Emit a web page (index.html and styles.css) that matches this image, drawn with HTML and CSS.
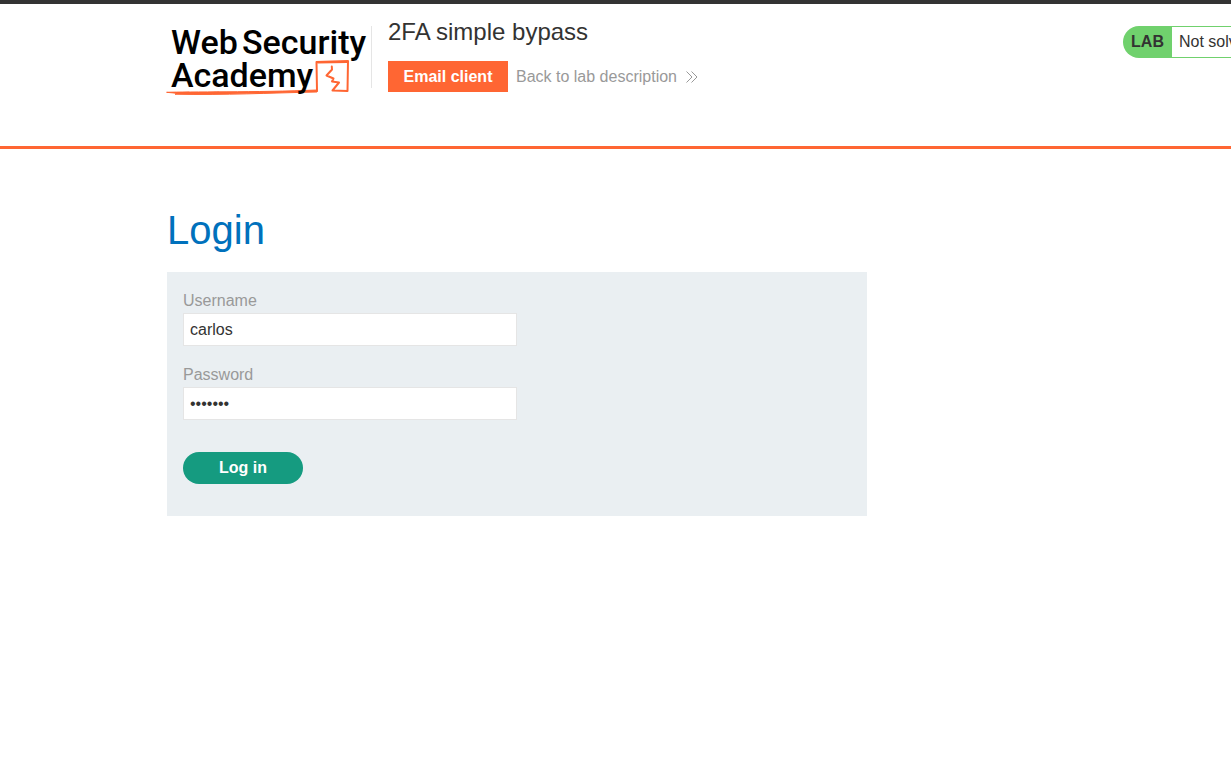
FILE: index.html
```html
<!DOCTYPE html>
<html lang="en">
<head>
<meta charset="utf-8">
<meta name="viewport" content="width=device-width, initial-scale=1">
<title>2FA simple bypass</title>
<link rel="stylesheet" href="styles.css">
</head>
<body>
<header class="lab-header">
  <a class="logo" href="#" aria-label="Web Security Academy">
    <svg class="logo-art" viewBox="0 0 204 76" width="204" height="76">
      <g class="logo-mark">
        <path class="logo-fill" d="M0 70.3 C20 69.6 90 70.5 150 68 L150 70 C100 71 60 73.2 8 72.2 L10 71.4 Z"/>
        <path d="M150 69 L149.500 40 L181 39 L180.500 69 L165.500 68.500 L172 60.500 L165 59.500 L166.500 56.500 L159.500 53.500 L165 47.500 L164.800 44.500"/>
        <path d="M151 40.500 L180 40"/>
      </g>
      <g class="logo-text">
        <text x="4" y="32">Web</text>
        <text x="75" y="32">Security</text>
        <text x="4" y="65">Academy</text>
      </g>
    </svg>
  </a>
  <div class="title-box">
    <h2 class="title">2FA simple bypass</h2>
    <nav class="links">
      <a class="email-button" href="#">Email client</a>
      <a class="back-link" href="#">Back to lab description
        <svg class="chevrons" viewBox="0 0 12 12" width="12" height="12"><path d="M0.5 0.5 L6 6 L0.5 11.5 M5.500 0.5 L11 6 L5.500 11.5"/></svg>
      </a>
    </nav>
  </div>
  <div class="status">
    <span class="status-tag">LAB</span>
    <span class="status-text">Not solved</span>
  </div>
</header>
<main class="page">
  <h1 class="heading">Login</h1>
  <form class="login-form">
    <label class="label" for="username">Username</label>
    <input class="field" id="username" type="text" value="carlos">
    <label class="label" for="password">Password</label>
    <input class="field" id="password" type="password" value="montoya">
    <button class="submit" type="button">Log in</button>
  </form>
</main>
</body>
</html>
```
FILE: styles.css
```css
* {
  box-sizing: border-box;
}

body {
  margin: 0;
  border-top: 4px solid #333;
  background: #fff;
  color: #333332;
  font: 16px/24px "Liberation Sans", Arial, sans-serif;
}

.lab-header {
  display: flex;
  align-items: flex-start;
  min-height: 145px;
  padding: 12px 0 0 167px;
  border-bottom: 3px solid #ff6633;
  overflow: hidden;
}

.logo {
  flex: none;
  width: 205px;
  height: 62px;
  margin-top: 10px;
  border-right: 1px solid #e5e5e5;
}

.logo-art {
  display: block;
  overflow: visible;
  margin-top: -4px;
}

.logo-text {
  fill: #000;
  font: 500 34px Roboto, sans-serif;
}

.logo-mark {
  fill: none;
  stroke: #ff6633;
  stroke-width: 2;
  stroke-linecap: round;
  stroke-linejoin: round;
}

.logo-fill {
  fill: #ff6633;
  stroke-width: 1;
}

.title-box {
  flex: 1;
  padding-left: 16px;
}

.title {
  margin: 0 0 13px;
  font-size: 24px;
  font-weight: 400;
  line-height: 32px;
}

.links {
  display: flex;
  align-items: center;
  gap: 8px;
}

.email-button {
  width: 120px;
  background: #ff6633;
  color: #fff;
  font-weight: 700;
  line-height: 31px;
  text-align: center;
  text-decoration: none;
}

.back-link {
  display: flex;
  align-items: center;
  gap: 9px;
  color: #999;
  text-decoration: none;
}

.chevrons {
  fill: none;
  stroke: #999;
  stroke-width: 1;
}

.status {
  display: flex;
  flex: 0 0 108px;
  min-width: 0;
  margin-top: 10px;
  overflow: hidden;
  line-height: 32px;
  white-space: nowrap;
}

.status-tag {
  flex: none;
  width: 49px;
  border-radius: 16px 0 0 16px;
  background: #70d16d;
  font-weight: 700;
  text-align: center;
}

.status-text {
  flex: none;
  padding: 0 32px 0 7px;
  border: 1px solid #70d16d;
  border-left: 0;
  line-height: 30px;
}

.page {
  padding: 57px 16px 0 167px;
}

.heading {
  margin: 0 0 18px;
  color: #0071bc;
  font-size: 40px;
  font-weight: 400;
  line-height: 48px;
}

.login-form {
  display: flex;
  flex-direction: column;
  align-items: flex-start;
  max-width: 700px;
  padding: 16px 16px 32px;
  background: #eaeff2;
}

.label {
  color: #999;
  line-height: 25px;
}

.field {
  width: 50%;
  height: 33px;
  margin: 0 0 16px;
  padding: 0 6px;
  border: 1px solid #e5e5e5;
  background: #fff;
  color: #333332;
  font: inherit;
}

.submit {
  width: 120px;
  height: 32px;
  margin-top: 16px;
  padding: 0;
  border: 0;
  border-radius: 16px;
  background: #159b80;
  color: #fff;
  font: inherit;
  font-weight: 700;
}
```
